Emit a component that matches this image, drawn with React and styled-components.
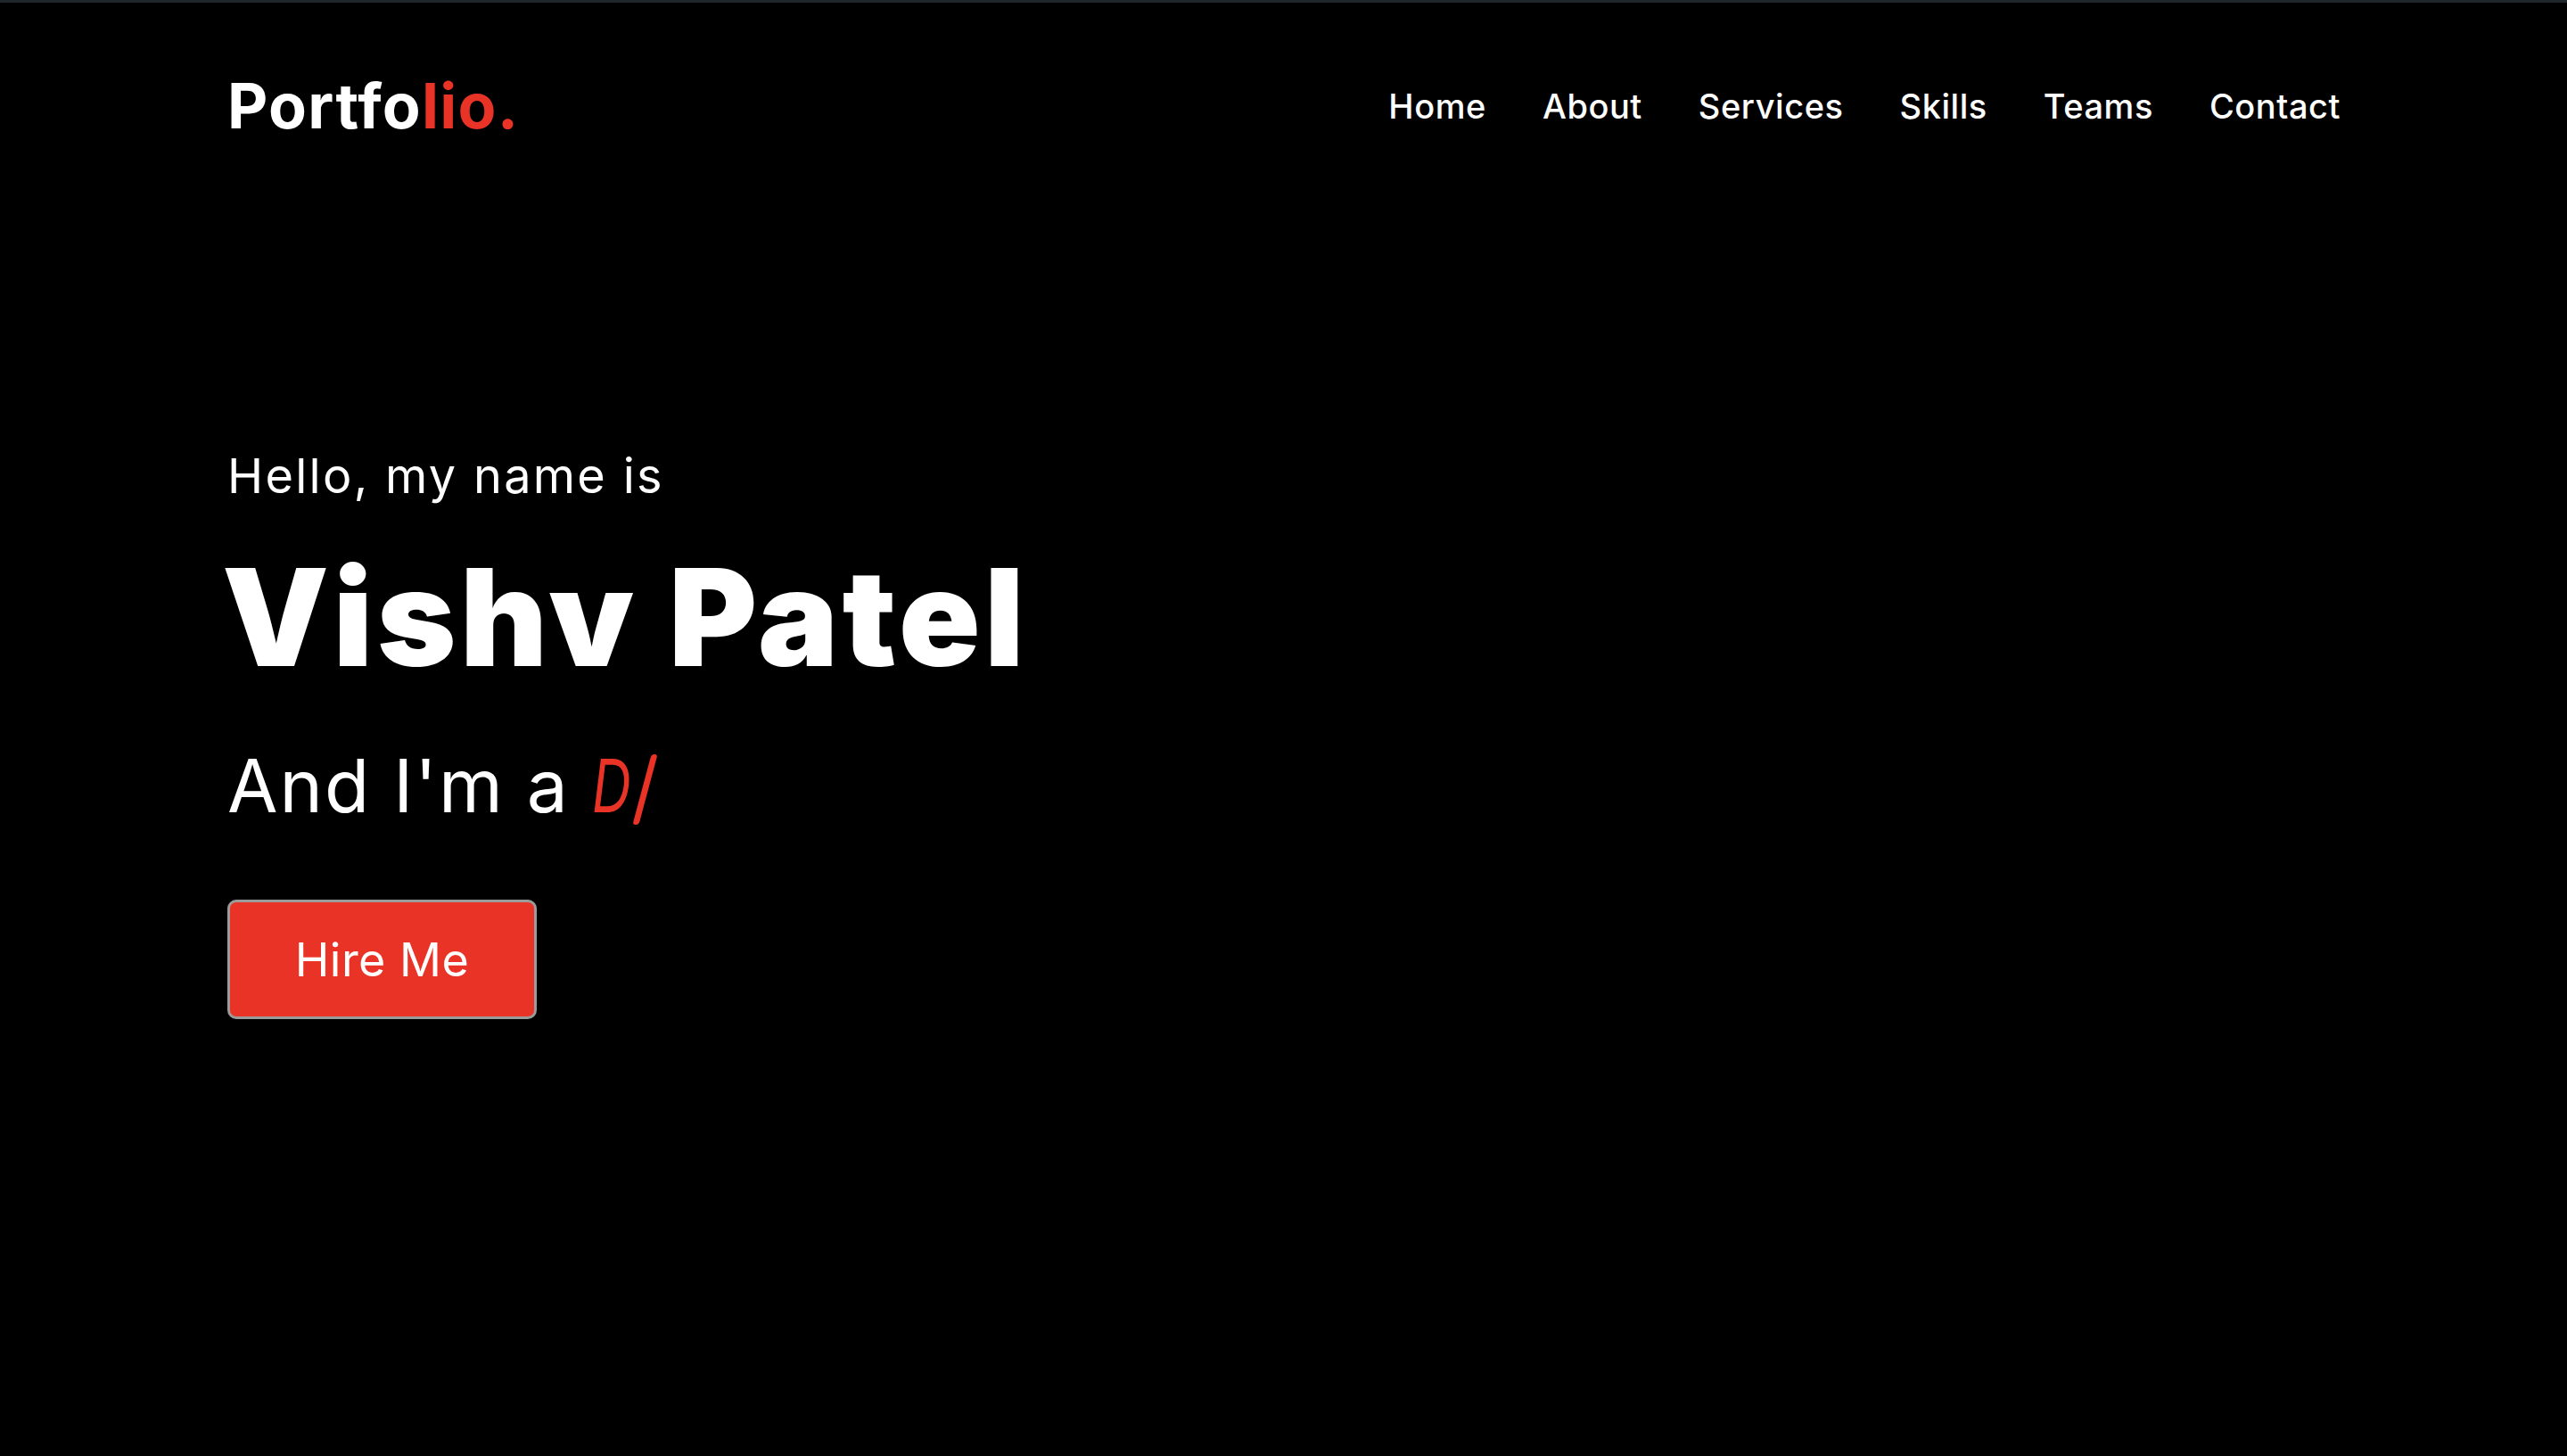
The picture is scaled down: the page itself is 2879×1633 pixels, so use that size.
import React from "react"
import styled, { createGlobalStyle } from "styled-components"

const GlobalStyle = createGlobalStyle`
  * {
    margin: 0;
    padding: 0;
    box-sizing: border-box;
  }
  body {
    background: #000;
    color: #fff;
    font-family: "Inter", "Noto Sans", sans-serif;
  }
`

const Page = styled.div`
  min-height: 100vh;
  background: #000;
  border-top: 3px solid #20272a;
`
const Header = styled.header`
  display: flex;
  justify-content: space-between;
  align-items: center;
  height: 231px;
  padding: 0 254px 0 255px;
`
const Logo = styled.div`
  font-size: 70px;
  line-height: 1;
  font-weight: 700;
  letter-spacing: 1.3px;
`
const Accent = styled.span`
  color: #e93326;
`
const Nav = styled.nav`
  display: flex;
  gap: 63px;
`
const NavLink = styled.a`
  font-size: 38px;
  line-height: 1;
  font-weight: 500;
  letter-spacing: 0.55px;
  color: #fff;
  text-decoration: none;
`
const Hero = styled.section`
  display: flex;
  flex-direction: column;
  align-items: flex-start;
  padding: 273px 255px 0;
`
const Greeting = styled.p`
  font-size: 54px;
  line-height: 1;
  font-weight: 400;
  letter-spacing: 2.3px;
`
const Name = styled.h1`
  margin-top: 56px;
  margin-left: -6px;
  font-size: 151px;
  line-height: 1;
  font-weight: 900;
  letter-spacing: 4.5px;
`
const Role = styled.p`
  display: flex;
  align-items: center;
  margin-top: 73px;
  font-size: 82px;
  line-height: 1;
  font-weight: 400;
  letter-spacing: 2px;
  white-space: pre;
`
const Typed = styled.span`
  display: inline-block;
  width: 44px;
  color: #e93326;
  font-style: italic;
  font-weight: 400;
  transform: scaleX(0.74);
  transform-origin: left center;
`
const Cursor = styled.span`
  display: inline-block;
  margin-left: 12px;
  width: 7px;
  height: 79px;
  border-radius: 4px;
  background: #e93326;
  transform: translateY(3px) skewX(-15deg);
`
const HireButton = styled.button`
  margin-top: 86px;
  width: 347px;
  height: 134px;
  background: #e93326;
  border: 3px solid #9b9b9b;
  border-radius: 10px;
  color: #fff;
  font-family: "Inter", "Noto Sans", sans-serif;
  font-size: 52px;
  font-weight: 400;
  letter-spacing: 0.5px;
`

const links = ["Home", "About", "Services", "Skills", "Teams", "Contact"]

export default function App() {
  return (
    <Page>
      <GlobalStyle />
      <Header>
        <Logo>
          Portfo<Accent>lio.</Accent>
        </Logo>
        <Nav>
          {links.map((link) => (
            <NavLink key={link} href="#">
              {link}
            </NavLink>
          ))}
        </Nav>
      </Header>
      <Hero>
        <Greeting>Hello, my name is</Greeting>
        <Name>Vishv Patel</Name>
        <Role>
          And I'm a <Typed>D</Typed>
          <Cursor />
        </Role>
        <HireButton>Hire Me</HireButton>
      </Hero>
    </Page>
  )
}
